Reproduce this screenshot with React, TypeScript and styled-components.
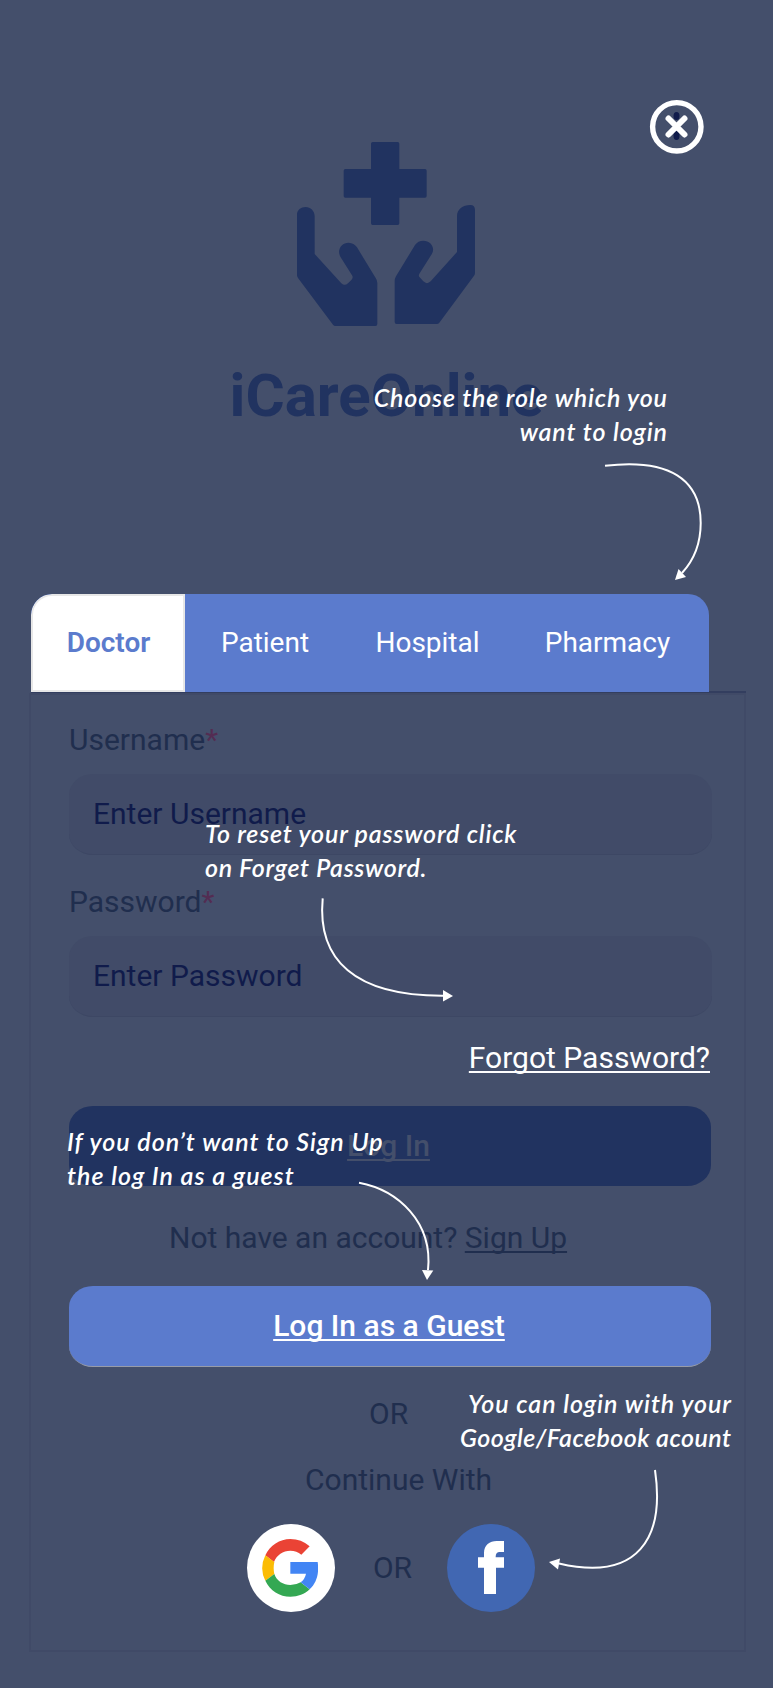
import React from "react";
import styled, { createGlobalStyle } from "styled-components";

const GlobalStyle = createGlobalStyle`
  *, *::before, *::after { box-sizing: border-box; }
  body { margin: 0; background: #444f6b; }
  button { border: 0; padding: 0; background: none; font: inherit; }
`;

const Page = styled.main`
  position: relative;
  width: 773px;
  height: 1688px;
  overflow: hidden;
  display: flex;
  flex-direction: column;
  padding-top: 142px;
  background: #444f6b;
  font-family: Roboto, "Liberation Sans", sans-serif;
  font-size: 30px;
  line-height: 36px;
  color: #202e4e;
`;

const Brand = styled.header`
  height: 452px;
  display: flex;
  flex-direction: column;
  align-items: center;
  color: #213360;
`;

const BrandName = styled.h1`
  margin: 35px 0 0;
  font-size: 60px;
  line-height: 70px;
  font-weight: 700;
`;

const TabRow = styled.div`
  width: 715px;
  height: 99px;
  margin-left: 31px;
  border-bottom: 2px solid #333e5f;
`;

const Tabs = styled.nav`
  display: flex;
  width: 678px;
  height: 98px;
  overflow: hidden;
  border-radius: 21px 21px 0 0;
  background: #5b7bcd;
`;

const Tab = styled.button<{ $width: number; $active?: boolean }>`
  width: ${(p) => p.$width}px;
  height: 98px;
  padding-bottom: 1px;
  padding-left: ${(p) => (p.$active ? 1 : 0)}px;
  font-size: 28px;
  text-align: center;
  color: ${(p) => (p.$active ? "#5b7bcd" : "#fff")};
  font-weight: ${(p) => (p.$active ? 600 : 400)};
  background: ${(p) => (p.$active ? "#fff" : "transparent")};
  border: ${(p) => (p.$active ? "2px solid #e7e7e7" : "0")};
  border-radius: ${(p) => (p.$active ? "21px 0 0 0" : "0")};
`;

const Panel = styled.section`
  width: 717px;
  height: 959px;
  margin-left: 29px;
  padding: 27px 32px 0 38px;
  border: 2px solid #404a67;
  display: flex;
  flex-direction: column;
`;

const Field = styled.label`
  display: flex;
  flex-direction: column;
  gap: 16px;
  margin-bottom: 29px;
`;

const Required = styled.span`
  color: #532c52;
`;

const InputBox = styled.span`
  display: flex;
  align-items: center;
  height: 81px;
  padding: 0 24px;
  border-radius: 24px / 21px;
  border-bottom: 1px solid #3d4764;
  background: #414b68;
  color: #101b4b;
`;

const Underlined = styled.span`
  text-decoration: underline;
  text-decoration-thickness: 1.5px;
  text-underline-offset: 3px;
  text-decoration-skip-ink: none;
`;

const Forgot = styled.div`
  margin-top: -6px;
  padding-right: 2px;
  text-align: right;
  color: #fff;
`;

const Action = styled.button<{ $guest?: boolean }>`
  width: 642px;
  height: ${(p) => (p.$guest ? 81 : 80)}px;
  flex: none;
  margin-top: 30px;
  padding-right: ${(p) => (p.$guest ? 2 : 3)}px;
  border-radius: 24px / 21px;
  font-weight: 500;
  color: ${(p) => (p.$guest ? "#fff" : "#444f6b")};
  background: ${(p) => (p.$guest ? "#5b7bcd" : "#213360")};
  border-bottom: ${(p) => (p.$guest ? "1px solid #989ca8" : "0")};
`;

const Line = styled.div<{ $top: number; $shift: number }>`
  margin-top: ${(p) => p.$top}px;
  padding-left: ${(p) => p.$shift}px;
  white-space: nowrap;
`;

const Socials = styled.div`
  display: flex;
  align-items: center;
  margin: 26px 0 0 178px;
`;

const SocialButton = styled.button<{ $color: string; $nudge?: number }>`
  display: flex;
  align-items: center;
  justify-content: center;
  width: 88px;
  height: 88px;
  padding-right: ${(p) => p.$nudge ?? 0}px;
  border-radius: 50%;
  background: ${(p) => p.$color};
`;

const SocialOr = styled.span`
  width: 112px;
  text-align: center;
  padding-left: 3px;
`;

const CloseButton = styled.button`
  position: absolute;
  left: 649px;
  top: 99px;
  width: 56px;
  height: 56px;
`;

const Note = styled.p<{ $x: number; $y: number; $w: number; $right?: boolean }>`
  position: absolute;
  left: ${(p) => p.$x}px;
  top: ${(p) => p.$y}px;
  width: ${(p) => p.$w}px;
  margin: 0;
  display: flex;
  flex-direction: column;
  align-items: ${(p) => (p.$right ? "flex-end" : "flex-start")};
  font: italic 600 25px/34px Lato, "Open Sans", sans-serif;
  color: #fff;
  white-space: nowrap;
`;

const NoteLine = styled.span<{ $spacing: number }>`
  letter-spacing: ${(p) => p.$spacing}px;
  margin-right: ${(p) => -p.$spacing}px;
`;

const Arrows = styled.svg`
  position: absolute;
  inset: 0;
  pointer-events: none;
`;

const BrandMark = styled.svg`
  flex: none;
  margin-right: 2px;
`;

const BrandIcon = () => (
  <BrandMark width="178" height="184" viewBox="51 66 534 552" fill="currentColor">
    <path d="M278 66h75q5 0 5 5v76h77q5 0 5 5v76q0 5-5 5h-77v77q0 5-5 5h-75q-5 0-5-5v-77h-77q-5 0-5-5v-76q0-5 5-5h77V71q0-5 5-5z" />
    <path d="M51 284C51 270 63 261 77 261S104 272 104 289V402L184 490Q194 499 204 490L214 480Q221 473 216 466L181 410C170 390 184 368 206 368Q222 369 231 382L287 474Q292 481 292 489V612Q292 618 286 618H166Q162 618 159 614L54 474Q51 470 51 466Z" />
    <path d="M585 270C585 260 580 255 571 255C548 255 531 268 531 289V396L452 484Q441 495 430 484L419 472Q414 467 419 460L455 403C467 383 452 362 430 362Q414 362 405 375L348 469Q344 476 344 484V606Q344 612 350 612H470Q475 612 478 608L581 469Q585 464 585 459Z" />
  </BrandMark>
);

const GoogleLogo = () => (
  <svg width="56" height="58" viewBox="96 450 168 174">
    <path fill="#ea4335" d="M106 499C120 469 149 450 181 450Q214 450 239 472L214 497Q200 485 181 485C159 485 140 498 132 519Z" />
    <path fill="#fbbc05" d="M106 499L133 519Q129 537 133 555L106 575Q87 538 106 499Z" />
    <path fill="#34a853" d="M106 575L133 555C140 576 160 588 181 588Q199 588 212 580L239 601C224 616 204 623 181 623C149 623 120 605 106 575Z" />
    <path fill="#4285f4" d="M181 519H263C268 552 260 582 239 601L212 580Q225 570 228 554H181Z" />
  </svg>
);

const FacebookLogo = () => (
  <svg width="88" height="88" viewBox="651 402 264 264" fill="#fff">
    <path d="M762 612V533H744V502H762V489C762 465 779 453 800 453H822V486H809C801 486 797 491 797 500V502H822V533H798V612Z" />
  </svg>
);

const tabs = [
  { name: "Doctor", width: 154 },
  { name: "Patient", width: 160 },
  { name: "Hospital", width: 165 },
  { name: "Pharmacy", width: 195 },
];

const arrows = [
  { curve: "M605 465.7C670 458 700.7 480 700.7 523C700.7 542 694 560 682 573", head: "675,580 678.5,569 686,577" },
  { curve: "M322.7 898.3C317 960 355 996 443 995.7", head: "443,990 453,996 443,1001.5" },
  { curve: "M359 1182.7C398 1190 433 1222 428 1270", head: "422,1270 433.3,1270.5 427,1280" },
  { curve: "M655 1470C665 1538 638 1582 559 1563.5", head: "549,1562 560,1558.5 558,1569.5" },
];

export default function App() {
  return (
    <>
      <GlobalStyle />
      <Page>
        <Brand>
          <BrandIcon />
          <BrandName>iCareOnline</BrandName>
        </Brand>

        <TabRow>
          <Tabs>
            {tabs.map((tab, i) => (
              <Tab key={tab.name} $width={tab.width} $active={i === 0}>
                {tab.name}
              </Tab>
            ))}
          </Tabs>
        </TabRow>

        <Panel>
          {["Username", "Password"].map((name) => (
            <Field key={name}>
              <span>
                {name}
                <Required>*</Required>
              </span>
              <InputBox>Enter {name}</InputBox>
            </Field>
          ))}
          <Forgot>
            <Underlined>Forgot Password?</Underlined>
          </Forgot>
          <Action>
            <Underlined>Log In</Underlined>
          </Action>
          <Line $top={34} $shift={100}>
            Not have an account? <Underlined>Sign Up</Underlined>
          </Line>
          <Action $guest>
            <Underlined>Log In as a Guest</Underlined>
          </Action>
          <Line $top={29} $shift={300}>OR</Line>
          <Line $top={30} $shift={236}>Continue With</Line>
          <Socials>
            <SocialButton $color="#fff" $nudge={2} aria-label="Google">
              <GoogleLogo />
            </SocialButton>
            <SocialOr>OR</SocialOr>
            <SocialButton $color="#4167b2" aria-label="Facebook">
              <FacebookLogo />
            </SocialButton>
          </Socials>
        </Panel>

        <CloseButton aria-label="Close">
          <svg width="56" height="56" viewBox="0 0 56 56" fill="none">
            <ellipse cx="27.5" cy="17" rx="3" ry="4" fill="#101b4b" />
            <ellipse cx="27.5" cy="36.5" rx="3" ry="4.5" fill="#101b4b" />
            <circle cx="27.8" cy="27.8" r="24.2" stroke="#fff" strokeWidth="5.4" />
            <path d="M19.5 19.5L35.5 35.5M35.5 19.5L19.5 35.5" stroke="#fff" strokeWidth="5.9" strokeLinecap="round" />
          </svg>
        </CloseButton>

        <Note $x={367} $y={380} $w={300} $right>
          <NoteLine $spacing={0.84}>Choose the role which you</NoteLine>
          <NoteLine $spacing={0.9}>want to login</NoteLine>
        </Note>
        <Note $x={205} $y={816} $w={320}>
          <NoteLine $spacing={0.8}>To reset your password click</NoteLine>
          <NoteLine $spacing={0.65}>on Forget Password.</NoteLine>
        </Note>
        <Note $x={67} $y={1124} $w={320}>
          <NoteLine $spacing={1}>If you don’t want to Sign Up</NoteLine>
          <NoteLine $spacing={1}>the log In as a guest</NoteLine>
        </Note>
        <Note $x={451} $y={1386} $w={280} $right>
          <NoteLine $spacing={0.95}>You can login with your</NoteLine>
          <NoteLine $spacing={0.45}>Google/Facebook acount</NoteLine>
        </Note>

        <Arrows width="773" height="1688" viewBox="0 0 773 1688">
          {arrows.map((a) => (
            <g key={a.head}>
              <path d={a.curve} fill="none" stroke="#fff" strokeWidth="2" />
              <polygon points={a.head} fill="#fff" />
            </g>
          ))}
        </Arrows>
      </Page>
    </>
  );
}
